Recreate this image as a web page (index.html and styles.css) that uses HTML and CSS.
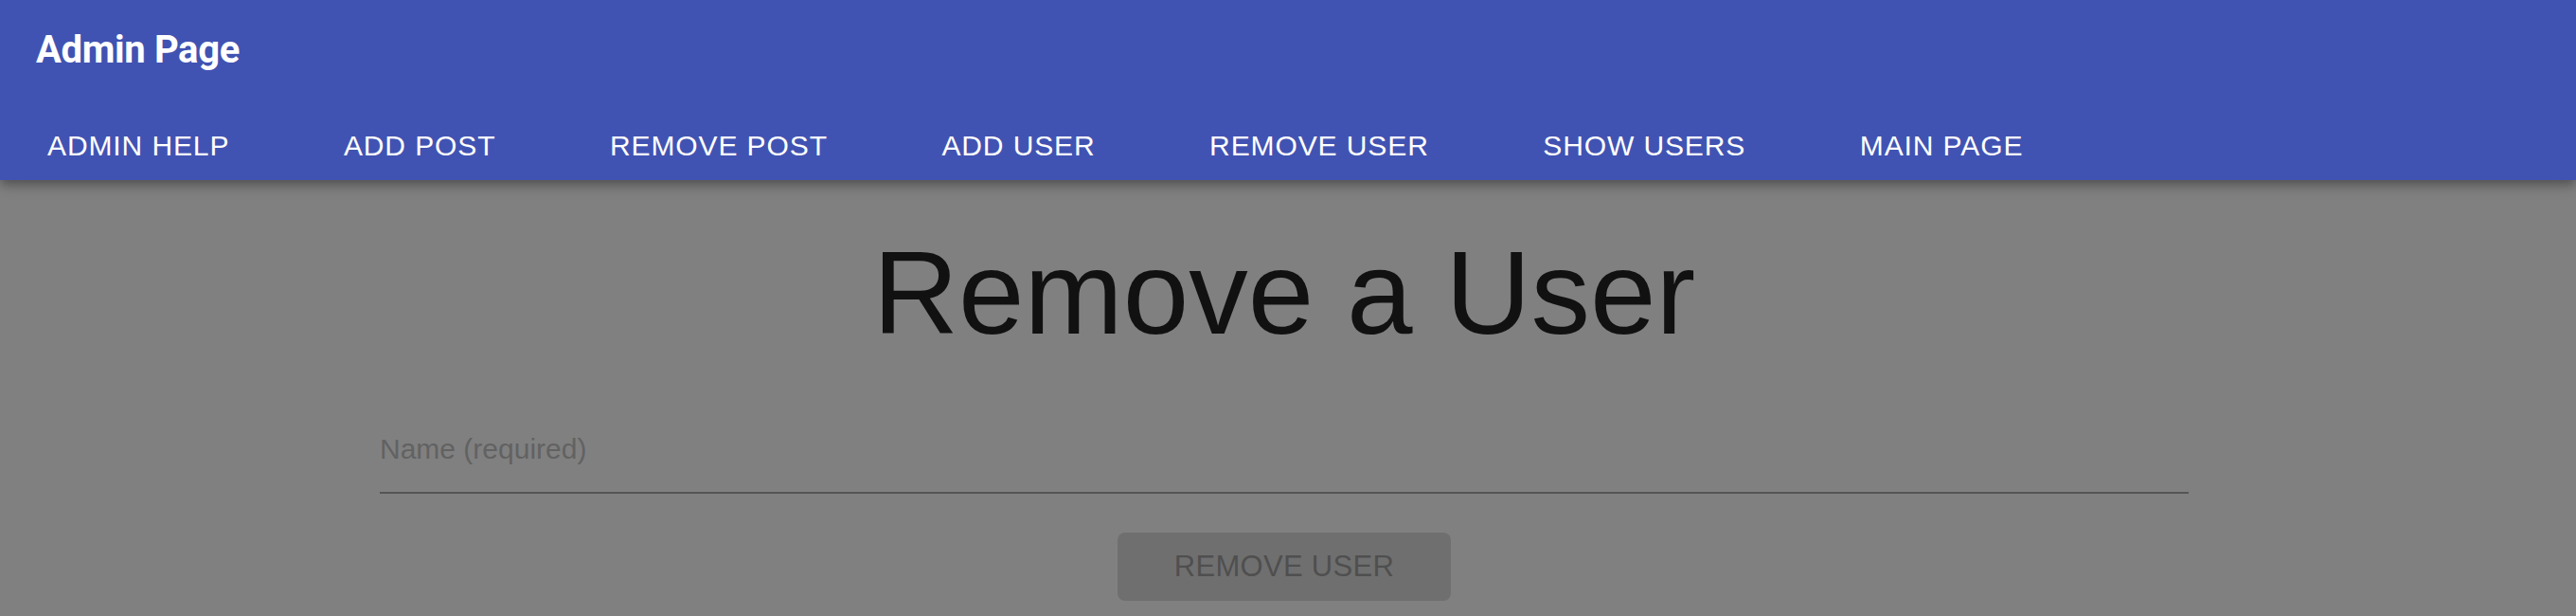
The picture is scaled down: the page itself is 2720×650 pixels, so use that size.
FILE: index.html
```html
<!DOCTYPE html>
<html lang="en">
<head>
<meta charset="utf-8">
<title>Admin Page</title>
<link rel="stylesheet" href="styles.css">
</head>
<body>
<header class="appbar">
  <div class="toolbar">
    <h1 class="brand">Admin Page</h1>
  </div>
  <nav class="tabs">
    <a class="tab" href="#">Admin Help</a>
    <a class="tab" href="#">Add Post</a>
    <a class="tab" href="#">Remove Post</a>
    <a class="tab" href="#">Add User</a>
    <a class="tab" href="#">Remove User</a>
    <a class="tab" href="#">Show Users</a>
    <a class="tab" href="#">Main Page</a>
  </nav>
</header>
<main class="content">
  <h2 class="page-title">Remove a User</h2>
  <form class="remove-form">
    <div class="field">
      <span class="field-label">Name (required)</span>
    </div>
    <button class="btn" type="button" disabled>Remove User</button>
  </form>
</main>
</body>
</html>
```
FILE: styles.css
```css
html, body {
  margin: 0;
  padding: 0;
  background: #808080;
  height: 650px;
  overflow: hidden;
}

body {
  font-family: "Liberation Sans", Arial, Helvetica, sans-serif;
}

.appbar {
  position: relative;
  z-index: 1;
  background: #4153b2;
  color: #ffffff;
  height: 190px;
  box-sizing: border-box;
  padding-top: 33px;
  box-shadow: 0 4px 8px -2px rgba(0, 0, 0, 0.2), 0 8px 10px 0 rgba(0, 0, 0, 0.14), 0 2px 20px 0 rgba(0, 0, 0, 0.12);
}

.toolbar {
  padding-left: 38px;
}

.brand {
  margin: 0;
  font-family: Roboto, "Liberation Sans", sans-serif;
  font-weight: 700;
  font-size: 40px;
  line-height: 40px;
  letter-spacing: -0.35px;
}

.tabs {
  display: flex;
  gap: 120.5px;
  padding-left: 50px;
  margin-top: 66px;
}

.tab {
  color: #ffffff;
  text-decoration: none;
  text-transform: uppercase;
  font-size: 30px;
  line-height: 30px;
  letter-spacing: 0.9px;
}

.content {
  margin-right: 8px;
  display: flex;
  flex-direction: column;
  align-items: center;
}

.page-title {
  margin: 44px 0 0;
  font-weight: 400;
  font-size: 125px;
  line-height: 150px;
  color: #111111;
}

.remove-form {
  display: flex;
  flex-direction: column;
  align-items: center;
  margin-top: 75px;
}

.field {
  width: 1910px;
  height: 60px;
  border-bottom: 2px solid #555555;
}

.field-label {
  display: block;
  font-size: 30px;
  line-height: 30px;
  color: #626262;
}

.btn {
  margin-top: 41px;
  width: 352px;
  height: 72px;
  border: none;
  border-radius: 8px;
  background: #6f6f6f;
  color: #4f4f4f;
  font-family: "Liberation Sans", Arial, sans-serif;
  font-size: 31px;
  letter-spacing: 0.3px;
  text-transform: uppercase;
  display: flex;
  align-items: center;
  justify-content: center;
  padding: 0;
}
```
